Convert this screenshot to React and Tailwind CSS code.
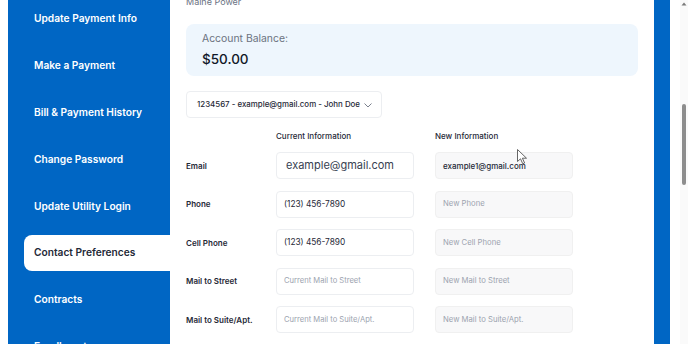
import React from "react";

const navItems = [
  "Update Payment Info",
  "Make a Payment",
  "Bill & Payment History",
  "Change Password",
  "Update Utility Login",
  "Contact Preferences",
  "Contracts",
  "Enrollments",
];

const rows = [
  { label: "Email", current: "example@gmail.com", big: true, next: "example1@gmail.com" },
  { label: "Phone", current: "(123) 456-7890", next: "", ph: "New Phone" },
  { label: "Cell Phone", current: "(123) 456-7890", next: "", ph: "New Cell Phone" },
  { label: "Mail to Street", current: "", cph: "Current Mail to Street", ph: "New Mail to Street" },
  { label: "Mail to Suite/Apt.", current: "", cph: "Current Mail to Suite/Apt.", ph: "New Mail to Suite/Apt." },
  { label: "Mail to City", current: "", cph: "Current Mail to City", ph: "New Mail to City" },
];

export default function App() {
  return (
    <div className="relative flex h-[344px] w-[688px] overflow-hidden bg-white font-['Inter',sans-serif]">
      <div className="w-2 shrink-0" />

      {/* Sidebar */}
      <nav className="flex w-[162px] shrink-0 flex-col gap-[10.8px] bg-[#0066c4] pt-px">
        {navItems.map((item) => {
          const active = item === "Contact Preferences";
          return (
            <div
              key={item}
              className={`ml-4 flex h-9 shrink-0 items-center whitespace-nowrap pl-2.5 text-[10.2px] font-semibold ${
                active ? "rounded-l-lg bg-white text-[#1f2937]" : "text-white"
              }`}
            >
              {item}
            </div>
          );
        })}
      </nav>

      {/* Main content */}
      <main className="w-[484px] shrink-0 px-4">
        <p className="-mt-[8px] text-[9px] leading-5 text-gray-500">Maine Power</p>

        <div className="mt-[12px] flex h-[52px] flex-col justify-center rounded-lg bg-[#eef6fd] pl-4">
          <p className="text-[10.4px] leading-[18px] text-[#6b7280]">Account Balance:</p>
          <p className="text-[13.5px] font-medium leading-[22px] text-[#111827]">$50.00</p>
        </div>

        <div className="mt-[15px] flex h-[27px] w-[196px] items-center justify-between rounded border border-[#eceef1] pl-2.5 pr-2">
          <span className="whitespace-nowrap text-[7.9px] font-medium text-[#1f2937]">
            1234567 - example@gmail.com - John Doe
          </span>
          <svg width="10" height="10" viewBox="0 0 10 10" fill="none" stroke="#6b7280" strokeWidth="0.9">
            <path d="M1.5 3.5 L5 7 L8.5 3.5" />
          </svg>
        </div>

        <div className="mt-[10px] grid grid-cols-[69px_138px_138px] gap-x-[21px]">
          <div />
          <p className="text-[8px] font-medium leading-4 text-[#1f2937]">Current Information</p>
          <p className="text-[8px] font-medium leading-4 text-[#1f2937]">New Information</p>
        </div>

        <div className="mt-[8px] flex flex-col gap-[11.5px]">
          {rows.map((r) => (
            <div key={r.label} className="grid grid-cols-[69px_138px_138px] items-center gap-x-[21px]">
              <p className="whitespace-nowrap text-[8px] font-semibold text-[#1f2937]">{r.label}</p>
              <div
                className={`flex h-[27px] items-center whitespace-nowrap rounded border border-[#eceef1] bg-white ${
                  r.big ? "pl-[9px] text-[11px] text-[#374151]" : "pl-[7px] text-[8.3px]"
                }`}
              >
                {r.current ? (
                  <span className={r.big ? "" : "text-[#1f2937]"}>{r.current}</span>
                ) : (
                  <span className="text-[7.6px] text-[#9ca3af]">{r.cph}</span>
                )}
              </div>
              <div className="flex h-[27px] items-center whitespace-nowrap rounded border border-[#f0f0f0] bg-[#f8f8f9] pl-[7px]">
                {r.next ? (
                  <span className="text-[8px] font-medium text-[#1f2937]">{r.next}</span>
                ) : (
                  <span className="text-[7.7px] text-[#9ca3af]">{r.ph}</span>
                )}
              </div>
            </div>
          ))}
        </div>
      </main>

      <div className="w-4 shrink-0 bg-[#0066c4]" />

      {/* Scrollbar */}
      <div className="flex w-[18px] shrink-0 justify-end bg-white">
        <div className="flex w-[8px] flex-col items-center bg-[#fafafa]">
          <svg width="6" height="6" viewBox="0 0 6 6" className="mt-[1px]">
            <path d="M0.5 4.5 L3 1.5 L5.5 4.5 Z" fill="#7a7a7a" />
          </svg>
          <div className="mt-[97px] h-[81px] w-[4px] rounded-full bg-[#8d8d8d]" />
        </div>
      </div>

      {/* mouse cursor */}
      <svg className="absolute left-[517px] top-[149px]" width="11" height="16" viewBox="0 0 11 16">
        <path d="M0.5 0.5 L0.5 12.5 L3.5 9.8 L5.8 14.8 L7.6 14 L5.4 9.2 L9.5 9.2 Z" fill="white" stroke="#555" strokeWidth="0.9" />
      </svg>
    </div>
  );
}
